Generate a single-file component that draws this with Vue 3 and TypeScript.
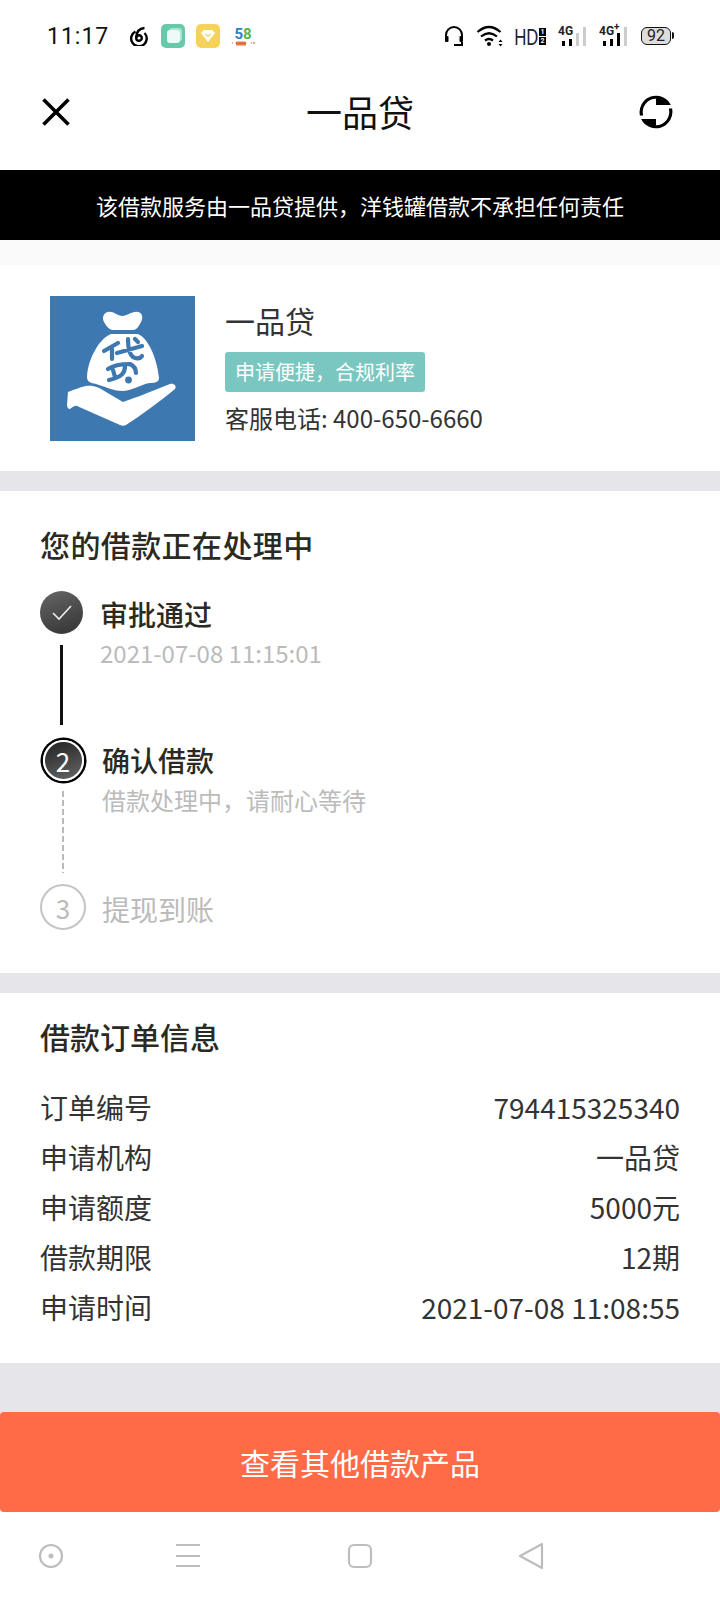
<script setup lang="ts">
type Row = { label: string; value: string }

const rows: Row[] = [
  { label: '订单编号', value: '794415325340' },
  { label: '申请机构', value: '一品贷' },
  { label: '申请额度', value: '5000元' },
  { label: '借款期限', value: '12期' },
  { label: '申请时间', value: '2021-07-08 11:08:55' },
]
</script>

<template>
  <div class="page">
    <div class="status">
      <span class="clock">11:17</span>
      <svg class="st-ic" width="20" height="20" viewBox="0 0 20 20" fill="none" stroke="#000" stroke-width="2.400">
        <path d="M6.500 5.500A7.800 7.800 0 1 0 15.500 7" />
        <circle cx="10" cy="12" r="2.800" />
        <path d="M7.200 12C7.200 6.500 10 2.500 15.500 2" />
      </svg>
      <span class="app-ic green"><i></i></span>
      <span class="app-ic yellow">
        <svg width="16" height="12" viewBox="0 0 16 12"><path d="M1 3 4 0h8l3 3-7 9z" fill="#fff" /><path d="M5.500 4 8 6.200 10.500 4" fill="none" stroke="#f5d35a" stroke-width="1.200" /></svg>
      </span>
      <span class="logo58">
        <b>5<em>8</em></b>
        <svg width="24" height="5" viewBox="0 0 24 5" fill="none" stroke="#e2622b" stroke-width="1.200">
          <path d="M1 2h1M5 1l1 3 1-3 1 3 1-3 1 3 1-3 1 3 1-3 1 3 1-3M20 2h1M23 1v2" />
        </svg>
      </span>
      <span class="st-right">
        <svg width="20" height="20" viewBox="0 0 20 20" fill="none" stroke="#000" stroke-width="2">
          <path d="M2 11V9a8 8 0 0 1 16 0v2" />
          <rect x="1" y="10" width="3.500" height="6" rx="1" fill="#000" stroke="none" />
          <rect x="15.500" y="10" width="3.500" height="6" rx="1" fill="#000" stroke="none" />
          <path d="M10 19h8v-3" />
        </svg>
        <svg class="wifi" width="28" height="22" viewBox="0 0 28 22" fill="none" stroke="#000" stroke-width="2.200">
          <path d="M1.500 7Q13 -3 24.500 7M5 11.500Q13 5 21 11.500M9 15.500Q13 12.500 17 15.500" />
          <circle cx="13" cy="19" r="2" fill="#000" stroke="none" />
          <path d="M24.500 14.500l-2 2.500h4zM24.500 21.500l-2-2.500h4z" fill="#000" stroke="none" />
        </svg>
        <span class="hd">HD</span>
        <span class="sim"><i>1</i><i>2</i></span>
        <span class="sig">
          <span class="sig-t">4G</span>
          <span class="bars"><i class="b1"></i><i class="b2"></i><i class="b3 bar-off"></i><i class="b4 bar-off"></i></span>
        </span>
        <span class="sig">
          <span class="sig-t">4G<sup>+</sup></span>
          <span class="bars"><i class="b1"></i><i class="b2"></i><i class="b3"></i><i class="b4 bar-off"></i></span>
        </span>
        <span class="batt"><span>92</span></span>
      </span>
    </div>

    <header class="head">
      <svg width="28" height="28" viewBox="0 0 28 28" stroke="#000" stroke-width="3.600" fill="none">
        <path d="M1.500 1.500l25 25M26.500 1.500l-25 25" />
      </svg>
      <h1>一品贷</h1>
      <svg class="refresh" width="36" height="36" viewBox="0 0 36 36" fill="#000">
        <path d="M1.900 21.500A16.500 16.500 0 0 1 32.900 11H18V4.700A13.300 13.300 0 0 0 5.200 21.500z" />
        <path d="M1.900 21.500A16.500 16.500 0 0 1 32.900 11H18V4.700A13.300 13.300 0 0 0 5.200 21.500z" transform="rotate(180 18 18)" />
      </svg>
    </header>

    <div class="notice">该借款服务由一品贷提供，洋钱罐借款不承担任何责任</div>
    <div class="strip"></div>

    <section class="org">
      <svg class="org-logo" width="145" height="145" viewBox="0 0 145 145">
        <rect width="145" height="145" fill="#3e78b0" />
        <path d="M58 16C63 15 66 19 72 20C78 20 82 15 88 16C93 17 93 23 91 26C89 30 87 33 84 34H62C59 33 56 30 54 26C52 22 53 17 58 16Z" fill="#fff" />
        <path d="M61 38H88C98 42 107 62 109 82C109 86 105 87 100 87C92 88 84 94 73 95C62 95 54 90 46 88C41 87 37 86 37 81C38 62 50 42 61 38Z" fill="#fff" />
        <path d="M18 96C24 94 30 91 36 90C44 89 50 92 56 96L73 106C85 102 105 94 120 88C124 87 127 90 125 93C112 104 90 120 76 129C74 130 72 130 70 129L27 110C24 109 22 112 20 113C18 113 17 111 17 109Z" fill="#fff" />
        <g fill="none" stroke="#3e78b0" stroke-width="4.200" stroke-linecap="round" stroke-linejoin="round">
          <path d="M68 47 54 55M62 53V63M67 57 92 50M78 43C78 52 79 58 83 61C86 63 90 63 92 60M85 43 88 46" />
          <path d="M58 73C64 69 74 68 80 68C84 70 86 73 86 77M63 74 65 81M75 70C75 77 72 81 59 84" />
        </g>
        <circle cx="78.500" cy="84" r="3.400" fill="#3e78b0" />
      </svg>
      <div class="org-info">
        <div class="org-name">一品贷</div>
        <span class="tag">申请便捷，合规利率</span>
        <div class="tel">客服电话: 400-650-6660</div>
      </div>
    </section>

    <div class="gap"></div>

    <section class="steps">
      <h2>您的借款正在处理中</h2>
      <div class="step step-1">
        <div class="mark">
          <span class="dot">
            <svg width="20" height="16" viewBox="0 0 20 16" fill="none" stroke="#eee" stroke-width="1.600"><path d="M1 8l6 6L19 1" /></svg>
          </span>
          <span class="line"></span>
        </div>
        <div class="step-text">
          <div class="step-title">审批通过</div>
          <div class="step-sub">2021-07-08 11:15:01</div>
        </div>
      </div>
      <div class="step step-2">
        <div class="mark">
          <span class="dot ring"><span>2</span></span>
          <span class="line dashed"></span>
        </div>
        <div class="step-text">
          <div class="step-title">确认借款</div>
          <div class="step-sub">借款处理中，请耐心等待</div>
        </div>
      </div>
      <div class="step step-3">
        <div class="mark"><span class="dot dot-off">3</span></div>
        <div class="step-text"><div class="step-title">提现到账</div></div>
      </div>
    </section>

    <div class="gap"></div>

    <section class="order">
      <h2>借款订单信息</h2>
      <div v-for="r in rows" :key="r.label" class="row">
        <span>{{ r.label }}</span>
        <span>{{ r.value }}</span>
      </div>
    </section>

    <div class="foot">
      <button class="cta">查看其他借款产品</button>
    </div>

    <nav class="nav">
      <svg width="26" height="26" viewBox="0 0 26 26" fill="none" stroke="#bdbdbd" stroke-width="2.200">
        <circle cx="13" cy="13" r="11" />
        <circle cx="13" cy="13" r="2.500" fill="#bdbdbd" stroke="none" />
      </svg>
      <svg class="n-menu" width="26" height="26" viewBox="0 0 26 26" stroke="#bdbdbd" stroke-width="2.200">
        <path d="M1 2h24M1 13h24M1 23h24" />
      </svg>
      <svg class="n-home" width="26" height="26" viewBox="0 0 26 26" fill="none" stroke="#bdbdbd" stroke-width="2.200">
        <rect x="2" y="2" width="22" height="22" rx="5" />
      </svg>
      <svg class="n-back" width="26" height="28" viewBox="0 0 26 28" fill="none" stroke="#bdbdbd" stroke-width="2.200" stroke-linejoin="round">
        <path d="M24 2 2 14l22 12z" />
      </svg>
    </nav>
  </div>
</template>

<style>
body {
  margin: 0;
  background: #fff;
}
</style>

<style scoped>
.page {
  width: 720px;
  height: 1600px;
  overflow: hidden;
  font-family: "Noto Sans CJK SC", "Noto Sans", sans-serif;
  color: #222;
  background: #fff;
}

.status {
  height: 72px;
  display: flex;
  align-items: center;
  padding: 0 47px;
  box-sizing: border-box;
}
.clock {
  font-family: Roboto, sans-serif;
  font-size: 23px;
  letter-spacing: 1px;
  color: #111;
  width: 82px;
  flex: none;
}
.st-ic {
  margin-right: 12px;
}
.app-ic {
  width: 24px;
  height: 24px;
  border-radius: 5px;
  margin-right: 11px;
  display: flex;
  align-items: center;
  justify-content: center;
}
.green {
  background: #66c9a9;
}
.green i {
  width: 13px;
  height: 13px;
  border-radius: 3px;
  background: #eefaf5;
  box-shadow: 2px -2px 0 #aee3cf;
}
.yellow {
  background: #f5d35a;
}
.logo58 {
  width: 24px;
  display: flex;
  flex-direction: column;
  align-items: center;
  line-height: 1;
}
.logo58 b {
  font: 700 15px/14px Roboto, sans-serif;
  color: #2a7fc5;
}
.logo58 em {
  font-style: normal;
  color: #5bb04a;
}
.st-right {
  margin-left: auto;
  display: flex;
  align-items: center;
}
.wifi {
  margin-left: 12px;
}
.hd {
  display: inline-block;
  width: 23px;
  font: 400 22px/1 "Noto Sans", sans-serif;
  letter-spacing: -1px;
  margin-left: 10px;
  transform: scaleX(0.78);
  transform-origin: left center;
}
.sim {
  display: flex;
  flex-direction: column;
  gap: 1px;
  margin-left: 2px;
}
.sim i {
  width: 7px;
  height: 8px;
  background: #000;
  color: #fff;
  font: 700 7px/8px Roboto, sans-serif;
  text-align: center;
}
.sig {
  width: 29px;
  margin-left: 12px;
  position: relative;
  height: 20px;
}
.sig-t {
  position: absolute;
  left: 0;
  top: 0;
  font: 700 12px/11px Roboto, sans-serif;
}
.sig-t sup {
  font-size: 10px;
  line-height: 0;
}
.bars {
  position: absolute;
  left: 4px;
  bottom: 0;
  display: flex;
  align-items: flex-end;
  gap: 4px;
}
.bars i {
  width: 3px;
  background: #000;
}
.bars .bar-off {
  background: #ccc;
}
.b1 { height: 5px; }
.b2 { height: 7px; }
.b3 { height: 13px; }
.b4 { height: 19px; }
.batt {
  position: relative;
  margin-left: 13px;
  margin-right: 2px;
  width: 30px;
  height: 18px;
  box-sizing: border-box;
  border: 1.500px solid #111;
  border-radius: 6px;
  background: #ddd;
  display: flex;
  align-items: center;
  justify-content: center;
  font: 400 16px/1 Roboto, sans-serif;
  color: #222;
}
.batt::after {
  content: "";
  position: absolute;
  right: -4px;
  top: 4px;
  width: 2px;
  height: 7px;
  border-radius: 0 2px 2px 0;
  background: #111;
}

.head {
  height: 98px;
  display: grid;
  grid-template-columns: 1fr auto 1fr;
  align-items: center;
  padding: 0 42px 18px;
  box-sizing: border-box;
}
.head h1 {
  margin: -2px 0 0;
  font-size: 36px;
  font-weight: 400;
  color: #111;
  line-height: 1;
}
.refresh {
  justify-self: end;
  margin-right: 4px;
}

.notice {
  height: 70px;
  line-height: 70px;
  background: #000;
  color: #fff;
  text-align: center;
  font-size: 22px;
}
.strip {
  height: 25px;
  background: #fafafa;
}

.org {
  height: 206px;
  box-sizing: border-box;
  padding: 31px 0 0 50px;
  display: flex;
  gap: 30px;
}
.org-logo {
  flex: none;
}
.org-info {
  display: flex;
  flex-direction: column;
  align-items: flex-start;
}
.org-name {
  font-size: 30px;
  line-height: 40px;
  margin-top: 4px;
  color: #333;
}
.tag {
  margin-top: 12px;
  height: 40px;
  line-height: 40px;
  padding: 0 10px;
  font-size: 20px;
  color: #fff;
  background: #7ac7c2;
  border-radius: 3px;
}
.tel {
  margin-top: 8px;
  font-size: 24px;
  line-height: 36px;
  color: #333;
}

.gap {
  height: 20px;
  background: #e6e6ea;
}

h2 {
  margin: 0;
  font-size: 30px;
  font-weight: 500;
  line-height: 40px;
  color: #2a2a22;
}
.steps {
  height: 482px;
  box-sizing: border-box;
  padding: 33px 40px 0 40px;
}
.steps h2 {
  margin-bottom: 27px;
  letter-spacing: 0.400px;
}
.step {
  display: flex;
}
.mark {
  width: 46px;
  display: flex;
  flex-direction: column;
  align-items: center;
  margin-right: 16px;
}
.dot {
  width: 43px;
  height: 43px;
  border-radius: 50%;
  background: linear-gradient(160deg, #666, #333);
  display: flex;
  align-items: center;
  justify-content: center;
  flex: none;
}
.step-1 .mark {
  align-items: flex-start;
  margin-right: 14px;
}
.line {
  width: 3px;
  height: 80px;
  background: #111;
  margin: 11px 0 12px 20px;
}
.ring {
  width: 37px;
  height: 37px;
  background: linear-gradient(160deg, #222, #666);
  color: #fff;
  font-size: 26px;
  border: 2px solid #fff;
  box-shadow: 0 0 0 2.500px #000;
  margin: 2.500px;
}
.dashed {
  width: 2px;
  height: 82px;
  background: repeating-linear-gradient(to bottom, #bbb 0 6px, transparent 6px 9px);
  margin: 8px 0 11px;
}
.dot-off {
  width: 46px;
  height: 46px;
  box-sizing: border-box;
  background: #fff;
  border: 2px solid #c4c4c4;
  color: #bbb;
  font-size: 26px;
}
.step-title {
  font-size: 28px;
  font-weight: 500;
  line-height: 40px;
  color: #2a2a22;
  margin-top: 3px;
}
.step-sub {
  font-size: 24px;
  line-height: 36px;
  margin-top: 1px;
  color: #bbb;
}
.step-2 .step-sub {
  margin-top: 2px;
}
.step-3 .step-title {
  color: #bbb;
  font-weight: 400;
  margin-top: 5px;
}

.order {
  height: 370px;
  box-sizing: border-box;
  padding: 23px 40px 0 40px;
}
.order h2 {
  margin-bottom: 26px;
}
.row {
  display: flex;
  justify-content: space-between;
  height: 50px;
  line-height: 50px;
  font-size: 28px;
  color: #333;
}

.foot {
  height: 149px;
  box-sizing: border-box;
  padding-top: 49px;
  background: linear-gradient(#e6e6ea calc(100% - 6px), #fff 0);
}
.cta {
  display: block;
  width: 100%;
  height: 100px;
  border: none;
  border-radius: 4px;
  background: #ff6a47;
  color: #fff;
  font-family: inherit;
  font-size: 30px;
}

.nav {
  height: 87px;
  display: flex;
  align-items: center;
  padding-left: 38px;
  box-sizing: border-box;
}
.n-menu {
  margin-left: 111px;
}
.n-home {
  margin-left: 146px;
}
.n-back {
  margin-left: 145px;
}
</style>
